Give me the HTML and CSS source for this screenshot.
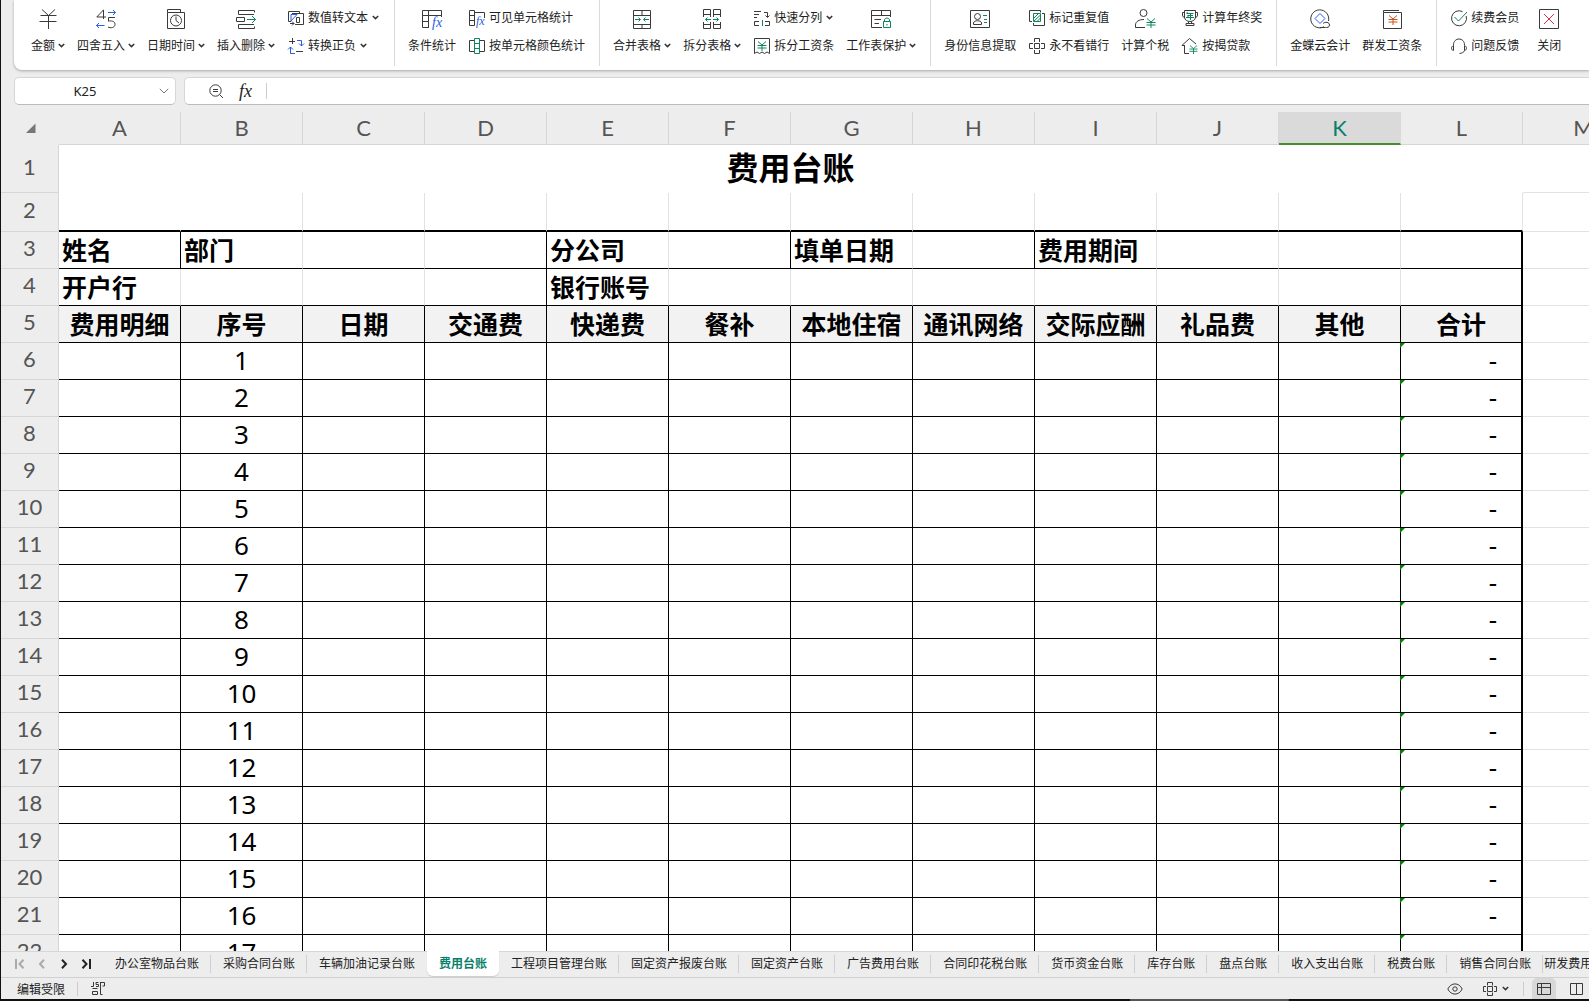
FILE: index.html
```html
<!DOCTYPE html>
<html lang="zh-CN">
<head>
<meta charset="utf-8">
<title>费用台账</title>
<link rel="stylesheet" href="styles.css">
</head>
<body>
<svg class="defs" aria-hidden="true">
  <symbol id="chev" viewBox="0 0 7 5"><path d="M.8 1L3.5 3.6 6.2 1" fill="none" stroke="#333" stroke-width="1.5"/></symbol>
  <symbol id="yen" viewBox="0 0 10 10"><path d="M1 .5L5 4 9 .5M.5 4.5H9.5M.5 7H9.5M5 4V10" fill="none"/></symbol>
</svg>

<header class="ribbon">
  <div class="group">
    <button class="big"><svg class="ic20" viewBox="0 0 20 20"><path d="M4 .5L10.5 6.5 17 .5M2.5 6.5H18.5M1.5 12.5H18.5M10.5 6.5V20"/></svg><span>金额<svg class="chev"><use href="#chev"/></svg></span></button>
    <button class="big"><svg class="ic20" viewBox="0 0 20 20"><path d="M7.500 10V.9L.8 8H10M19 8.500H12.500V12.200C15 11.500 19 12 19 15.300 19 18.700 14.500 19.500 12 18"/><path class="b" d="M12 3.500H19.500M17 1L19.500 3.500 17 6M8.500 16.500H.5M3 14L.5 16.500 3 19"/></svg><span>四舍五入<svg class="chev"><use href="#chev"/></svg></span></button>
    <button class="big"><svg class="ic20" viewBox="0 0 20 20"><path d="M1.500 3.500V.5H14.500V3.500M1.500 3.500H18.500V19.500H1.500ZM10 7.500V11.500L13 14"/><circle cx="10" cy="11.500" r="5.500"/></svg><span>日期时间<svg class="chev"><use href="#chev"/></svg></span></button>
    <button class="big"><svg class="ic20" viewBox="0 0 20 20"><path d="M18.500 3.500V1.500H2.500V5.500H18M.5 8.500H8.500V12.500H.5ZM18.500 17.500V19.500H2.500V15.500H18"/><path class="g" d="M11 10.500H19.500M16 7L19.500 10.500 16 14"/></svg><span>插入删除<svg class="chev"><use href="#chev"/></svg></span></button>
    <div class="stack">
      <button class="small"><svg class="ic18" viewBox="0 0 18 18"><path d="M4 12.500H1.500V2.500H12.500V4M5 4.500H16.500V15.500H8M9.500 8.500H12.500V13.500H9.500ZM3 14.500H7M5 12.500L7 14.500 5 16.500"/><path class="b" d="M4 12V5.500H10L4 12"/></svg><span>数值转文本<svg class="chev"><use href="#chev"/></svg></span></button>
      <button class="small"><svg class="ic18" viewBox="0 0 18 18"><path d="M5.500 1V7M2 4.500H8M9 14.500H16"/><path class="b" d="M10 3.500H14.500V9M12 6.500L14.500 9 17 6.500M8 16.500H3.500V10M1 12.500L3.500 10 6 12.500"/></svg><span>转换正负<svg class="chev"><use href="#chev"/></svg></span></button>
    </div>
  </div>

  <div class="group">
    <button class="big"><svg class="ic20" viewBox="0 0 20 20"><path d="M7 18.500H.5V1.500H19.500V8M.5 6.500H19.500M.5 12.500H7M6.500 1.500V18.500"/><text class="b fx" x="10" y="18">fx</text></svg><span>条件统计</span></button>
    <div class="stack">
      <button class="small"><svg class="ic18" viewBox="0 0 18 18"><path d="M1.500 1.500H6.500V16.500H1.500ZM1.500 6.500H6.500M1.500 11.500H6.500M6.500 3.500H16.500V9"/><text class="b fx sm" x="8" y="16">fx</text></svg><span>可见单元格统计</span></button>
      <button class="small"><svg class="ic18" viewBox="0 0 18 18"><path d="M6 3.500H1.500V14.500H6M12 3.500H16.500V14.500H12"/><path class="g" d="M6.500 1.500H11.500V16.500H6.500ZM6.500 6.500H11.500M6.500 11.500H11.500"/></svg><span>按单元格颜色统计</span></button>
    </div>
  </div>

  <div class="group">
    <button class="big"><svg class="ic20" viewBox="0 0 20 20"><path d="M1.500 1.500H18.500V19.500H1.500ZM1.500 6.500H18.500M1.500 15.500H18.500M10 1.500V6.500M10 15.500V19.500"/><path class="g" d="M3 10.500H8.500M6.500 8.500L8.500 10.500 6.500 12.500M17 10.500H11.500M13.500 8.500L11.500 10.500 13.500 12.500"/></svg><span>合并表格<svg class="chev"><use href="#chev"/></svg></span></button>
    <button class="big"><svg class="ic20" viewBox="0 0 20 20"><path d="M1.500 8V.5H8.500V8M1.500 5.500H8.500M11.500 8V.5H18.500V8M11.500 5.500H18.500M1.500 13V19.500H8.500V13M1.500 15.500H8.500M11.500 13V19.500H18.500V13M11.500 15.500H18.500"/><path class="g" d="M9 10.500H3.500M5.500 8.500L3.500 10.500 5.500 12.500M11 10.500H16.500M14.500 8.500L16.500 10.500 14.500 12.500"/></svg><span>拆分表格<svg class="chev"><use href="#chev"/></svg></span></button>
    <div class="stack">
      <button class="small"><svg class="ic18" viewBox="0 0 18 18"><path d="M1 2.500H8M1 5.500H6M1 8.500H4M11 3.500H14.500V8M12.500 6.500L14.500 8.500 16.500 6.500M6 12.500H1.500V16.500H6M12 12.500H16.500V16.500H12"/><path class="g" d="M9.500 11V17"/></svg><span>快速分列<svg class="chev"><use href="#chev"/></svg></span></button>
      <button class="small"><svg class="ic18" viewBox="0 0 18 18"><path d="M1.500 16.500V1.500H16.500V16.500L14 15 11.500 16.500 9 15 6.500 16.500 4 15Z"/><use class="g" href="#yen" x="4" y="4" width="10" height="10"/></svg><span>拆分工资条</span></button>
    </div>
    <button class="big"><svg class="ic20" viewBox="0 0 20 20"><path d="M11 18.500H.5V1.500H19.500V8M.5 6.500H19.500M10.500 1.500V6.500M3.500 10.500H10M3.500 14.500H8"/><path class="g" d="M12.500 12.500H19.500V18.500H12.500ZM13.500 12.500V11C13.500 8.500 18.500 8.500 18.500 11V12.500M16 15V16.500"/></svg><span>工作表保护<svg class="chev"><use href="#chev"/></svg></span></button>
  </div>

  <div class="group">
    <button class="big"><svg class="ic20" viewBox="0 0 20 20"><path d="M.5 1.500H19.500V18.500H.5ZM3.500 15.500V14C3.500 11 11.500 11 11.500 14V15.500Z"/><circle cx="7.500" cy="7.500" r="3"/><path class="g" d="M13 6.500H17M14 10.500H17M14 13.500H17"/></svg><span>身份信息提取</span></button>
    <div class="stack">
      <button class="small"><svg class="ic18" viewBox="0 0 18 18"><path d="M4 12.500H1.500V1.500H12.500V3.500M14 4.500H16.500V16.500H5.500V14"/><path class="g" d="M5.500 4.500H12.500V12.500H5.500ZM6 9L10 5M6 12L12.500 6M9 12.500L12.500 9"/></svg><span>标记重复值</span></button>
      <button class="small"><svg class="ic18" viewBox="0 0 18 18"><path d="M6.500 5V1.500H11.500V5M6.500 13V16.500H11.500V13M5 6.500H1.500V11.500H5M13 6.500H16.500V11.500H13M6.500 6.500H11.500V11.500H6.500Z"/></svg><span>永不看错行</span></button>
    </div>
    <button class="big"><svg class="ic20" viewBox="0 0 20 20"><circle cx="8.500" cy="4" r="3.500"/><path d="M10 18.500H.5V16C.5 12.500 4 10.500 9 10.500"/><use class="g" href="#yen" x="11" y="9" width="10" height="10"/></svg><span>计算个税</span></button>
    <div class="stack">
      <button class="small"><svg class="ic18" viewBox="0 0 18 18"><path d="M3.500 1.500H14.500V8C14.500 14 3.500 14 3.500 8ZM3.500 3.500H1.500V6C1.500 7.500 2.500 8.500 4 8.500M14.500 3.500H16.500V6C16.500 7.500 15.500 8.500 14 8.500M7.500 12.500V14.500M10.500 12.500V14.500M5 16.500V14.500H13V16.500Z"/><path class="g" d="M6.500 3L5.500 4.500M6 4.500H12.500M6.500 6.500H12M7 6.500V8.500M5 8.500H13M9.500 4.500V11"/></svg><span>计算年终奖</span></button>
      <button class="small"><svg class="ic18" viewBox="0 0 18 18"><path d="M3 8.500H.9L8.500 1.500 15 7M3.500 8V16.500H8"/><use class="g" href="#yen" x="8" y="8" width="9" height="9"/></svg><span>按揭贷款</span></button>
    </div>
  </div>

  <div class="group">
    <button class="big"><svg class="ic20" viewBox="0 0 20 20"><path d="M14 17.800A9 9 0 1 1 18.500 12M13 14.500C15 12.500 19.500 13 19.500 16 19.500 18.500 17 18.500 15.500 18.500H10"/><path class="b" d="M10 4.500L15 9.500 10 14.500 5 9.500Z"/></svg><span>金蝶云会计</span></button>
    <button class="big"><svg class="ic20" viewBox="0 0 20 20"><path d="M1.500 3.500H19.500V19.500H1.500ZM1.500 3.500V1.500H17"/><use class="o" href="#yen" x="6" y="6" width="10" height="10"/></svg><span>群发工资条</span></button>
  </div>

  <div class="group last">
    <div class="stack">
      <button class="small"><svg class="ic18" viewBox="0 0 18 18"><path d="M12.500 2.600A7.500 7.500 0 1 0 16.200 7"/><path class="g" d="M4.500 8L8.500 12 17 3"/></svg><span>续费会员</span></button>
      <button class="small"><svg class="ic18" viewBox="0 0 18 18"><path d="M3.500 13.500H3C1 12.500 1 9.500 3.500 8.500ZM14.500 13.500H15C17 12.500 17 9.500 14.500 8.500ZM3.500 8C3.500 0 14.500 0 14.500 8M14.500 13.500C14 15.500 12 16 9.500 16.500"/></svg><span>问题反馈</span></button>
    </div>
    <button class="big close"><svg class="ic20" viewBox="0 0 20 20"><path d="M.5 .5H19.500V19.500H.5Z"/><path class="r" d="M5 5L15 15M15 5L5 15"/></svg><span>关闭</span></button>
  </div>
</header>

<div class="formula-row">
  <div class="name-box">
    <input type="text" value="K25" aria-label="名称框">
    <svg class="ndrop" viewBox="0 0 10 6"><path d="M.8 .8L5 5 9.200 .8"/></svg>
  </div>
  <div class="formula">
    <svg class="mag" viewBox="0 0 15 15"><circle cx="6.500" cy="6.500" r="5.700"/><path d="M10.500 10.500L14 14M4 5.500H9M4 7.500H9"/></svg>
    <label for="fx">fx</label>
    <input type="text" id="fx">
  </div>
</div>

<main class="sheet">
<table>
<colgroup><col class="rowcol"><col span="13"></colgroup>
<thead>
<tr><th class="corner"><svg viewBox="0 0 10 10"><path d="M9.500 .5V10H0Z"/></svg></th><th>A<th>B<th>C<th>D<th>E<th>F<th>G<th>H<th>I<th>J<th class="sel">K<th>L<th>M</tr>
</thead>
<tbody>
<tr class="title"><th>1<td colspan="12" class="e">费用台账<td></tr>
<tr class="gap"><th>2 <td class="e"><td><td><td> <td><td><td><td> <td><td><td><td> <td class="m"></tr>
<tr class="info"><th>3 <td class="k">姓名<td>部门<td><td class="k"> <td>分公司<td class="k"><td>填单日期<td class="k"> <td>费用期间<td><td><td class="k2"> <td></tr>
<tr class="info"><th>4 <td>开户行<td><td><td class="k"> <td>银行账号<td><td><td> <td><td><td><td class="k2"> <td></tr>
<tr class="rec head"><th>5 <td>费用明细<td>序号<td>日期<td>交通费 <td>快递费<td>餐补<td>本地住宿<td>通讯网络 <td>交际应酬<td>礼品费<td>其他<td>合计 <td></tr>
<tr class="rec"><th>6 <td><td>1<td><td> <td><td><td><td> <td><td><td><td>- <td></tr>
<tr class="rec"><th>7 <td><td>2<td><td> <td><td><td><td> <td><td><td><td>- <td></tr>
<tr class="rec"><th>8 <td><td>3<td><td> <td><td><td><td> <td><td><td><td>- <td></tr>
<tr class="rec"><th>9 <td><td>4<td><td> <td><td><td><td> <td><td><td><td>- <td></tr>
<tr class="rec"><th>10 <td><td>5<td><td> <td><td><td><td> <td><td><td><td>- <td></tr>
<tr class="rec"><th>11 <td><td>6<td><td> <td><td><td><td> <td><td><td><td>- <td></tr>
<tr class="rec"><th>12 <td><td>7<td><td> <td><td><td><td> <td><td><td><td>- <td></tr>
<tr class="rec"><th>13 <td><td>8<td><td> <td><td><td><td> <td><td><td><td>- <td></tr>
<tr class="rec"><th>14 <td><td>9<td><td> <td><td><td><td> <td><td><td><td>- <td></tr>
<tr class="rec"><th>15 <td><td>10<td><td> <td><td><td><td> <td><td><td><td>- <td></tr>
<tr class="rec"><th>16 <td><td>11<td><td> <td><td><td><td> <td><td><td><td>- <td></tr>
<tr class="rec"><th>17 <td><td>12<td><td> <td><td><td><td> <td><td><td><td>- <td></tr>
<tr class="rec"><th>18 <td><td>13<td><td> <td><td><td><td> <td><td><td><td>- <td></tr>
<tr class="rec"><th>19 <td><td>14<td><td> <td><td><td><td> <td><td><td><td>- <td></tr>
<tr class="rec"><th>20 <td><td>15<td><td> <td><td><td><td> <td><td><td><td>- <td></tr>
<tr class="rec"><th>21 <td><td>16<td><td> <td><td><td><td> <td><td><td><td>- <td></tr>
<tr class="rec"><th>22 <td><td>17<td><td> <td><td><td><td> <td><td><td><td>- <td></tr>
</tbody>
</table>
</main>

<nav class="tabs">
  <div class="pager">
    <button aria-label="第一个" disabled><svg viewBox="0 0 12 10"><path d="M2 0V10M9.500 .8L5.500 5 9.500 9.200"/></svg></button>
    <button aria-label="上一个" disabled><svg viewBox="0 0 12 10"><path d="M8 .8L4 5 8 9.200"/></svg></button>
    <button aria-label="下一个"><svg viewBox="0 0 12 10"><path d="M4 .8L8 5 4 9.200"/></svg></button>
    <button aria-label="最后一个"><svg viewBox="0 0 12 10"><path d="M10 0V10M2.500 .8L6.500 5 2.500 9.200"/></svg></button>
  </div>
  <a href="#s1">办公室物品台账</a><a href="#s2">采购合同台账</a><a href="#s3" class="pre">车辆加油记录台账</a><a href="#s4" class="active">费用台账</a><a href="#s5">工程项目管理台账</a><a href="#s6">固定资产报废台账</a><a href="#s7">固定资产台账</a><a href="#s8">广告费用台账</a><a href="#s9">合同印花税台账</a><a href="#s10">货币资金台账</a><a href="#s11">库存台账</a><a href="#s12">盘点台账</a><a href="#s13">收入支出台账</a><a href="#s14">税费台账</a><a href="#s15">销售合同台账</a><a href="#s16" class="cut">研发费用台账</a>
</nav>

<footer class="status">
  <span>编辑受限</span><i class="vsep"></i>
  <svg class="js" viewBox="0 0 14 14"><path d="M2.500 0V4.500H0M7.500 .5H5V2.500H7.500V4.500H5M9 .5H13.500V4H11.500M9.500 .5V12.500H11.500M1.500 6.500H6.500M1.500 9.500H6.500V12.500H1.500Z"/></svg>
  <div class="view">
    <button aria-label="护眼模式"><svg width="16" height="12" viewBox="0 0 16 12"><path d="M.8 6C4 -.8 12 -.8 15.200 6 12 12.800 4 12.800 .8 6Z"/><circle cx="8" cy="6" r="2.200"/></svg></button>
    <button class="cross" aria-label="阅读模式"><svg width="14" height="14" viewBox="0 0 14 14"><path d="M4.500 3.500V.5H9.500V3.500M4.500 10.500V13.500H9.500V10.500M3 4.500H.5V9.500H3M11 4.500H13.500V9.500H11M4.500 4.500H9.500V9.500H4.500Z"/></svg><svg class="chev"><use href="#chev"/></svg></button>
    <i class="vsep"></i>
    <button class="on" aria-label="普通视图"><svg width="14" height="14" viewBox="0 0 14 14"><path d="M.5 1.500H13.500V12.500H.5ZM.5 5.500H13.500M4.500 1.500V12.500"/></svg></button>
    <button class="page" aria-label="分页预览"><svg width="14" height="14" viewBox="0 0 14 14"><path d="M.5 1.500H12.500V12.500H.5ZM6.500 1.500V12.500"/></svg></button>
  </div>
</footer>
<div class="edge"></div>
</body>
</html>
```

FILE: styles.css
```css
* { box-sizing: border-box; }
body {
  margin: 0;
  height: 100vh;
  overflow: hidden;
  display: flex;
  flex-direction: column;
  background: #ededed;
  border-left: 1px solid #111;
  font: 12px/18px "Noto Sans CJK SC", "Noto Sans", sans-serif;
  color: #222;
}
.defs { display: none; }
button {
  border: 0;
  padding: 0;
  margin: 0;
  background: none;
  font: inherit;
  color: inherit;
  white-space: nowrap;
}
input { border: 0; padding: 0; background: none; outline: 0; min-width: 0; color: #222; }
svg { fill: none; stroke: #3a3a3a; flex: none; }
.g { stroke: #0f855c; }
.b { stroke: #2b5ce6; }
.o { stroke: #c8501e; }
.r { stroke: #dc2a50; }
.fx { font: italic 14px "Liberation Serif", serif; fill: #2b5ce6; stroke-width: 0; }
.fx.sm { font-size: 12px; }

/* Ribbon */
.ribbon {
  display: flex;
  flex: none;
  margin-left: 13px;
  padding-bottom: 4px;
  background: #fff;
  border-bottom-left-radius: 8px;
  box-shadow: 0 1px 3px rgba(0, 0, 0, .3);
}
.group {
  display: flex;
  gap: 12px;
  padding: 9px 14px 11px 13px;
  border-right: 1px solid #d9d9d9;
}
.group:first-child { padding-left: 17px; padding-right: 15px; }
.group.last { border: 0; }
.big { display: flex; flex-direction: column; align-items: center; gap: 8px; }
.big.close { width: 36px; }
.ic20 { width: 20px; height: 20px; overflow: visible; }
.ic18 { width: 18px; height: 18px; overflow: visible; }
.big > span, .small > span { display: flex; align-items: center; line-height: 16px; padding-bottom: 2px; }
.chev { width: 7px; height: 5px; margin-left: 3px; }
.small .chev { margin-left: 4px; }
.stack { display: flex; flex-direction: column; gap: 10px; }
.small { display: flex; align-items: center; gap: 3px; height: 18px; }

/* Name box and formula bar */
.formula-row { display: flex; flex: none; gap: 8px; padding: 7px 0 7px 13px; }
.name-box, .formula {
  display: flex;
  align-items: center;
  height: 28px;
  background: #fff;
  border: 1px solid #d6d6d6;
  border-bottom-color: #bbb;
  border-radius: 5px;
}
.name-box { width: 162px; padding-right: 6px; }
.name-box input { flex: 1; padding-right: 4px; text-align: center; font: 13px "Noto Sans", sans-serif; }
.ndrop { width: 10px; height: 6px; stroke: #777; }
.formula { flex: 1; border-right: 0; border-radius: 5px 0 0 5px; padding-left: 24px; }
.mag { width: 15px; height: 15px; }
.formula label {
  width: 28px;
  margin-left: 15px;
  border-right: 1px solid #ccc;
  font: italic 18px/16px "Liberation Serif", serif;
}
.formula input { flex: 1; height: 24px; padding: 0 6px; font: 13px "Noto Sans", sans-serif; }

/* Grid */
.sheet { flex: 1; min-height: 0; overflow: hidden; background: #ededed; }
table { width: 1644px; table-layout: fixed; border-collapse: separate; border-spacing: 0; background: #fff; }
.rowcol { width: 58px; }
th {
  padding: 0 0 4px;
  background: #ededed;
  border: solid #d6d6d6;
  border-width: 0 1px 1px 0;
  color: #555;
  font: 22px/26px Lato, sans-serif;
}
thead th { height: 33px; padding: 0 0 1px; }
thead .corner { border-color: #ededed; }
.corner svg { width: 10px; height: 10px; display: block; margin-left: 25px; fill: #777; stroke: none; }
thead .sel { padding: 0; background: #dadada; color: #087f6b; border-color: #dadada; border-bottom: 2px solid #43902a; }
td {
  height: 37px;
  padding: 0 0 2px;
  border: solid #e2e2e2;
  border-width: 0 1px 1px 0;
  color: #000;
  font: bold 25px/30px "Noto Sans CJK SC", sans-serif;
  white-space: nowrap;
}
.title td { height: 48px; padding-bottom: 6px; text-align: center; font-size: 32px; line-height: 40px; }
.title .e { border-color: #fff; }
.gap td { height: 39px; border-bottom: 2px solid #000; }
.gap .e { border-right-color: #fff; }
.gap .m { border-bottom: 1px solid #e2e2e2; }
.info td { padding-left: 3px; text-align: left; }
.info td:not(:last-child) { border-bottom-color: #000; }
.info .k { border-right-color: #000; }
.info .k2 { border-right: 2px solid #000; }
.rec td { text-align: center; font-weight: 400; font-size: 26px; font-family: "Noto Sans", sans-serif; }
.rec td:not(:last-child) { border-color: #000; }
.rec td:nth-child(13) { border-right-width: 2px; }
.rec:not(.head) td:nth-child(13) { position: relative; text-align: right; padding-right: 24px; }
.rec:not(.head) td:nth-child(13)::before {
  content: "";
  position: absolute;
  left: -1px;
  top: 0;
  border-top: 5px solid #008000;
  border-right: 5px solid transparent;
}
.head td { font: bold 25px/30px "Noto Sans CJK SC", sans-serif; }
.head td:not(:last-child) { background: #f2f2f2; }

/* Sheet tabs */
.tabs {
  display: flex;
  flex: none;
  height: 26px;
  overflow: hidden;
  box-shadow: inset 0 1px #d6d6d6;
  white-space: nowrap;
}
.pager { display: flex; flex: none; align-items: center; gap: 10px; width: 102px; padding-left: 13px; }
.pager svg { display: block; width: 12px; height: 10px; stroke: #222; stroke-width: 2; }
.pager button:disabled svg { stroke: #aaa; }
.tabs a {
  flex: none;
  padding: 3px 12px 5px;
  color: #222;
  text-decoration: none;
  line-height: 18px;
  background: linear-gradient(#cfcfcf, #cfcfcf) right 4px / 1px 18px no-repeat;
}
.tabs .pre { background: none; }
.tabs .active {
  height: 25px;
  background: #fff;
  border-radius: 0 0 6px 6px;
  box-shadow: 0 1px 1px #ccc;
  color: #087f6b;
  font-weight: 700;
}
.tabs .cut { padding-left: 1px; }

/* Status bar */
.status { display: flex; flex: none; align-items: center; height: 22px; padding-left: 16px; border-top: 1px solid #d0d0d0; }
.vsep { width: 1px; height: 14px; background: #ccc; }
.status > .vsep { margin: 0 13px 0 12px; }
.js { width: 14px; height: 14px; }
.view { display: flex; align-items: center; margin-left: auto; height: 21px; }
.view button { display: flex; align-items: center; justify-content: center; }
.view .cross { margin: 0 14px 0 20px; }
.cross .chev { margin-left: 5px; }
.view .on { width: 24px; height: 21px; margin: 0 14px 0 8px; background: #d8d8d8; border-radius: 5px 5px 0 0; }
.view .page { margin-right: 5px; }
.edge { flex: none; height: 2px; background: linear-gradient(#555, #555) 79% 0 / 10% 2px no-repeat #111; }
```
